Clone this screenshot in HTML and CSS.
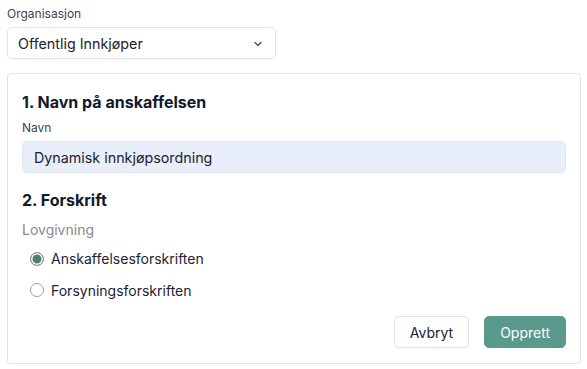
FILE: index.html
```html
<!DOCTYPE html>
<html lang="no">
<head>
<meta charset="utf-8">
<link rel="stylesheet" href="styles.css">
</head>
<body>
<div class="page">
  <div class="field org">
    <label class="small-label">Organisasjon</label>
    <div class="select">
      <span>Offentlig Innkjøper</span>
      <svg class="chev" width="8" height="6" viewBox="0 0 8 6"><path d="M1 1.5 L4 4.5 L7 1.5" fill="none" stroke="#555b66" stroke-width="1.6" stroke-linecap="round" stroke-linejoin="round"/></svg>
    </div>
  </div>
  <div class="card">
    <h2 class="heading">1. Navn på anskaffelsen</h2>
    <label class="small-label">Navn</label>
    <div class="input">Dynamisk innkjøpsordning</div>
    <h2 class="heading h2">2. Forskrift</h2>
    <div class="group-label">Lovgivning</div>
    <div class="radios">
      <div class="radio-row"><span class="radio checked"></span><span>Anskaffelsesforskriften</span></div>
      <div class="radio-row"><span class="radio"></span><span>Forsyningsforskriften</span></div>
    </div>
    <div class="actions">
      <button class="btn secondary">Avbryt</button>
      <button class="btn primary">Opprett</button>
    </div>
  </div>
</div>
</body>
</html>
```
FILE: styles.css
```css
* { box-sizing: border-box; }
html, body { margin: 0; padding: 0; background: #fff; }
body {
  font-family: Inter, "Noto Sans", sans-serif;
  color: #1b2232;
}
.page {
  padding: 6px 7px 0 7px;
  width: 587px;
}
.small-label {
  display: block;
  font-size: 12px;
  line-height: 16px;
  color: #3d4350;
}
.org { width: 269px; }
.org .small-label { margin-bottom: 5px; }
.select {
  height: 32px;
  border: 1px solid #e3e5e8;
  border-radius: 5px;
  display: flex;
  align-items: center;
  justify-content: space-between;
  padding: 0 13px 0 10px;
  font-size: 14.3px;
  color: #1b2232;
  box-shadow: 0 1px 1px rgba(0,0,0,0.03);
}
.chev { margin-top: 1px; }
.card {
  margin-top: 14px;
  width: 574px;
  height: 291px;
  border: 1px solid #e2e3e6;
  border-radius: 4px;
  padding: 18px 14px 0 14px;
}
.heading {
  margin: 0;
  font-size: 16px;
  line-height: 20px;
  font-weight: 700;
  color: #0f1a2c;
}
.card .small-label { margin-top: 8px; margin-bottom: 5px; }
.input {
  height: 32px;
  background: #e8effb;
  border: 1px solid #dfe5ef;
  border-radius: 5px;
  display: flex;
  align-items: center;
  padding-left: 11px;
  font-size: 14.3px;
  color: #1b2232;
}
.h2 { margin-top: 17px; }
.group-label {
  margin-top: 11px;
  font-size: 14px;
  line-height: 18px;
  color: #868a92;
}
.radios { margin-top: 4px; padding-left: 8px; }
.radio-row {
  display: flex;
  align-items: center;
  gap: 7px;
  height: 31.5px;
  font-size: 14px;
  color: #1b2232;
}
.radio {
  width: 14px;
  height: 14px;
  border-radius: 50%;
  border: 1px solid #9ba1aa;
  background: #fff;
}
.radio.checked {
  background: #4f7f74;
  box-shadow: inset 0 0 0 1.5px #fff;
  border-color: #8e9499;
}
.actions {
  display: flex;
  justify-content: flex-end;
  gap: 15px;
  margin-top: 10px;
}
.btn {
  height: 32px;
  border-radius: 5px;
  font-family: Inter, "Noto Sans", sans-serif;
  font-size: 14px;
  padding: 0 15px;
}
.secondary {
  background: #fff;
  border: 1px solid #e3e5e8;
  color: #1b2232;
  box-shadow: 0 1px 2px rgba(0,0,0,0.05);
}
.primary {
  background: #5a9a8c;
  border: 1px solid #5a9a8c;
  color: #fff;
}
```
